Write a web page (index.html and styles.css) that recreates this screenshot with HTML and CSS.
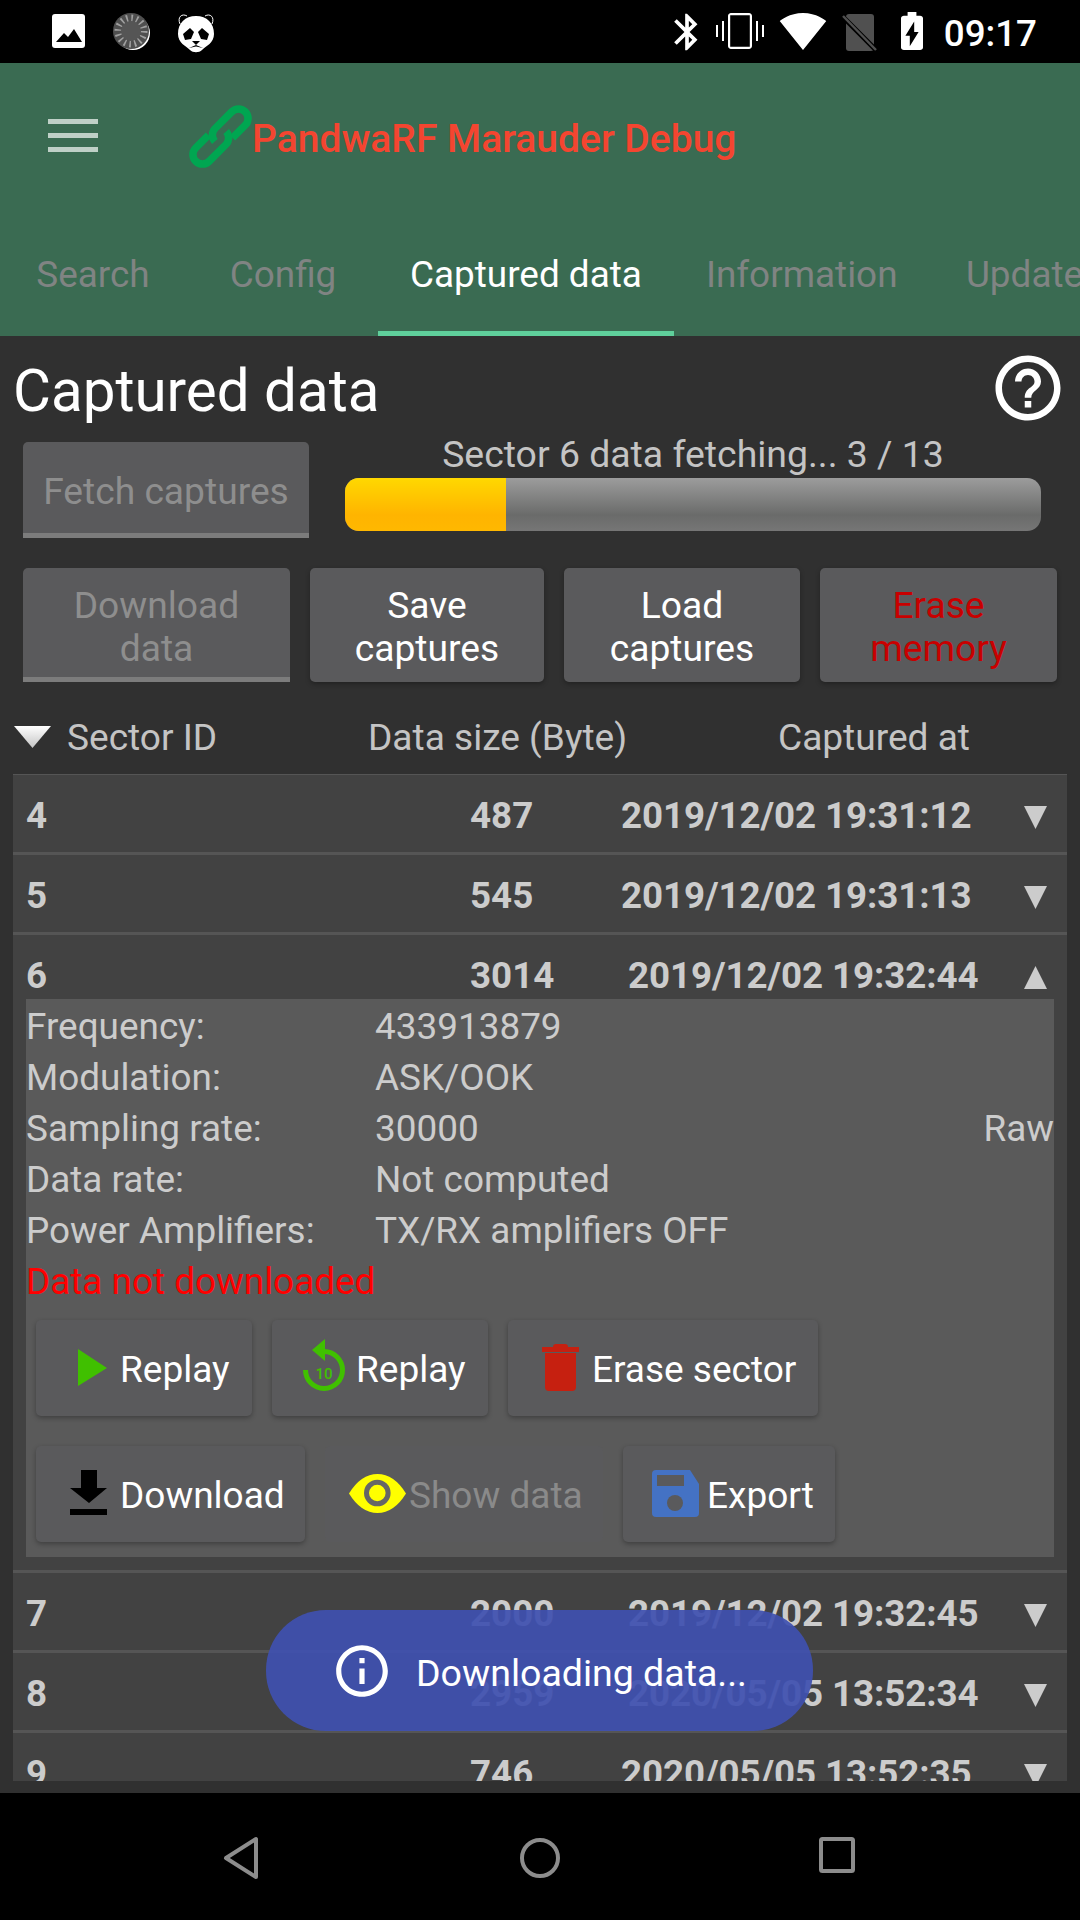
FILE: index.html
```html
<!DOCTYPE html>
<html lang="en">
<head>
    <meta charset="UTF-8">
    <meta name="viewport" content="width=device-width, initial-scale=1.0">
    <title>PandwaRF Marauder Debug</title>
    <link rel="stylesheet" href="styles.css">
</head>
<body>
<div class="screen">
    <div class="status-bar">
        <div class="status-left">
            <svg class="ic-image" width="33" height="34" viewBox="0 0 33 34"><rect width="33" height="34" rx="3" fill="#fff"/><path d="M4 28 L12 19 L16 23 L22 15 L30 28z" fill="#000"/></svg>
            <svg class="ic-spin" width="38" height="37" viewBox="0 0 38 37"><circle cx="20" cy="20" r="17" fill="#fff"/><circle cx="18" cy="18" r="18" fill="#4f4f4f"/><circle cx="18" cy="18" r="13" fill="none" stroke="#a0a0a0" stroke-width="7" stroke-dasharray="1.6 3.5"/><circle cx="18" cy="18" r="10" fill="#555"/></svg>
            <svg class="ic-panda" width="38" height="40" viewBox="0 0 38 40"><path d="M3 11 C0 4 5 0 10 3 M35 11 C38 4 33 0 28 3" fill="none" stroke="#fff" stroke-width="1"/><path d="M19 3 C30 3 37 10 37 21 C37 30 29 33 25 37 C22 40 16 40 13 37 C9 33 1 30 1 21 C1 10 8 3 19 3z" fill="#fff"/><path d="M6 21 L13 15 L17 19 L14 26 L8 27z M32 21 L25 15 L21 19 L24 26 L30 27z" fill="#000"/><path d="M15 28 H23 L19 32z M12 35 L19 32 L26 35 L19 33.5z" fill="#000"/></svg>
        </div>
        <div class="status-right">
            <svg class="ic-bt" width="44" height="44" viewBox="0 0 24 24" fill="#fff"><path d="M17.71 7.71L12 2h-1v7.59L6.41 5 5 6.41 10.59 12 5 17.59 6.41 19 11 14.41V22h1l5.71-5.71-4.3-4.29 4.3-4.29zM13 5.83l1.88 1.88L13 9.59V5.83zm1.88 10.46L13 18.17v-3.76l1.88 1.88z"/></svg>
            <svg class="ic-vib" width="48" height="48" viewBox="0 0 24 24" fill="#fff"><path d="M0 15h1V9H0v6zm3 2h1V7H3v10zm17-8v8h1V7h-1zm3 0v6h1V9h-1zM16.5 3h-9C6.67 3 6 3.67 6 4.5v15c0 .83.67 1.5 1.5 1.5h9c.83 0 1.5-.67 1.5-1.5v-15c0-.83-.67-1.5-1.5-1.5zM16.9 19.9H7.1V4.1h9.8v15.8z"/></svg>
            <svg class="ic-wifi" width="48" height="48" viewBox="0 0 24 24" fill="#fff"><path d="M12.01 21.49L23.64 7c-.45-.34-4.93-4-11.64-4C5.28 3 .81 6.66.36 7l11.63 14.49.01.01.01-.01z"/></svg>
            <svg class="ic-sim" width="35" height="38" viewBox="0 0 35 38"><path d="M7 0 H29 Q32 0 32 3 V34 Q32 37 29 37 H7 Q4 37 4 34 V3 Q4 0 7 0z" fill="#505050"/><path d="M0 2 L35 37" stroke="#000" stroke-width="5"/><path d="M1 2 L34 36" stroke="#505050" stroke-width="2.5"/></svg>
            <svg class="ic-batt" width="22" height="38" viewBox="7 2 10 20" preserveAspectRatio="none" fill="#fff"><path d="M15.67 4H14V2h-4v2H8.33C7.6 4 7 4.6 7 5.33v15.33C7 21.4 7.6 22 8.33 22h7.33c.74 0 1.34-.6 1.34-1.33V5.33C17 4.6 16.4 4 15.67 4zM11 20v-5.5H9L13 7v5.5h2L11 20z"/></svg>
            <span class="clock">09:17</span>
        </div>
    </div>

    <header class="app-bar">
        <div class="toolbar">
            <div class="burger"><span></span><span></span><span></span></div>
            <svg class="ic-link" width="63" height="63" viewBox="0 0 63 63"><g transform="rotate(-45 31.5 31.5)" fill="none" stroke="#00a651" stroke-width="7.5"><path d="M24 22 H6 a9.5 9.5 0 0 0 0 19 H30 a9.5 9.5 0 0 0 9 -9"/><path d="M39 41 H57 a9.5 9.5 0 0 0 0 -19 H33 a9.5 9.5 0 0 0 -9 9"/></g></svg>
            <span class="app-title">PandwaRF Marauder Debug</span>
        </div>
        <nav class="tabs">
            <a class="tab">Search</a>
            <a class="tab">Config</a>
            <a class="tab tab-active">Captured data</a>
            <a class="tab">Information</a>
            <a class="tab">Update</a>
        </nav>
    </header>

    <main class="content">
        <div class="title-row">
            <h1>Captured data</h1>
            <svg width="78" height="78" viewBox="0 0 24 24" fill="#fff"><path d="M11 18h2v-2h-2v2zm1-16C6.48 2 2 6.48 2 12s4.48 10 10 10 10-4.48 10-10S17.52 2 12 2zm0 18c-4.41 0-8-3.59-8-8s3.59-8 8-8 8 3.59 8 8-3.59 8-8 8zm0-14c-2.21 0-4 1.79-4 4h2c0-1.1.9-2 2-2s2 .9 2 2c0 2-3 1.75-3 5h2c0-2.25 3-2.5 3-5 0-2.21-1.79-4-4-4z"/></svg>
        </div>

        <div class="fetch-row">
            <button class="btn btn-off fetch-btn">Fetch captures</button>
            <div class="progress-box">
                <div class="progress-label">Sector 6 data fetching... 3 / 13</div>
                <div class="progress"><div class="progress-fill" style="width: 23.2%"></div></div>
            </div>
        </div>

        <div class="action-row">
            <button class="btn btn-off">Download<br>data</button>
            <button class="btn">Save<br>captures</button>
            <button class="btn">Load<br>captures</button>
            <button class="btn btn-danger">Erase<br>memory</button>
        </div>

        <div class="list-head">
            <svg width="37" height="24" viewBox="0 0 37 24"><defs><linearGradient id="headTri" x1="0" y1="0" x2="0" y2="1"><stop offset="0" stop-color="#fff"/><stop offset="1" stop-color="#c4c4c4"/></linearGradient></defs><polygon points="0,1 37,1 18.5,23" fill="url(#headTri)"/></svg>
            <span>Sector ID</span>
            <span>Data size (Byte)</span>
            <span>Captured at</span>
        </div>

        <div class="list">
            <div class="row">
                <div class="row-head"><span>4</span><span>487</span><span>2019/12/02 19:31:12</span><svg class="arrow" viewBox="0 0 23 23"><polygon points="0,0 23,0 11.5,23"/></svg></div>
            </div>
            <div class="row">
                <div class="row-head"><span>5</span><span>545</span><span>2019/12/02 19:31:13</span><svg class="arrow" viewBox="0 0 23 23"><polygon points="0,0 23,0 11.5,23"/></svg></div>
            </div>
            <div class="row row-open">
                <div class="row-head row-shift"><span>6</span><span>3014</span><span>2019/12/02 19:32:44</span><svg class="arrow" viewBox="0 0 23 23"><polygon points="0,23 23,23 11.5,0"/></svg></div>
                <div class="details">
                    <div class="line"><span>Frequency:</span><span>433913879</span></div>
                    <div class="line"><span>Modulation:</span><span>ASK/OOK</span></div>
                    <div class="line"><span>Sampling rate:</span><span>30000</span><span class="raw">Raw</span></div>
                    <div class="line"><span>Data rate:</span><span>Not computed</span></div>
                    <div class="line"><span>Power Amplifiers:</span><span>TX/RX amplifiers OFF</span></div>
                    <div class="line line-error">Data not downloaded</div>
                    <div class="btn-row">
                        <button class="btn icon-btn w-replay">
                            <svg width="57" height="57" viewBox="0 0 57 57"><polygon points="14,9 43,28 14,46" fill="#40c000"/></svg>Replay</button>
                        <button class="btn icon-btn w-replay">
                            <svg width="57" height="57" viewBox="0 0 57 57"><path d="M24 11.5 A18.5 18.5 0 1 1 5.5 30" fill="none" stroke="#40c000" stroke-width="5"/><polygon points="25,-1 12,10 25,21" fill="#40c000"/><text x="24" y="39" class="ten">10</text></svg>Replay</button>
                        <button class="btn icon-btn w-erase">
                            <svg width="57" height="57" viewBox="0 0 57 57" fill="#c62010"><path d="M17 7 Q17 4 20 4 H29 Q32 4 32 7 H43 V12 H6 V7z"/><path d="M9 13 H40 V47 Q40 51 36 51 H13 Q9 51 9 47z"/></svg>Erase sector</button>
                    </div>
                    <div class="btn-row">
                        <button class="btn icon-btn w-download">
                            <svg width="57" height="57" viewBox="0 0 57 57"><polygon points="17,4 33,4 33,22 43,22 25,37 6,22 17,22"/><rect x="6" y="43" width="37" height="6"/></svg>Download</button>
                        <button class="btn icon-btn btn-flat w-show">
                            <svg width="57" height="57" viewBox="0 0 57 57"><path d="M-4 27.5 Q8 8 24.5 8 Q41 8 53 27.5 Q41 47 24.5 47 Q8 47 -4 27.5z" fill="#ff0"/><circle cx="24.3" cy="27" r="10.8" fill="none" stroke="#666" stroke-width="5"/></svg>Show data</button>
                        <button class="btn icon-btn w-export">
                            <svg width="57" height="57" viewBox="0 0 57 57"><path d="M5 4 H39 L48 18 V47 Q48 51 44 51 H5 Q1 51 1 47 V8 Q1 4 5 4z" fill="#4472c4"/><rect x="6" y="9" width="27" height="11" fill="#5a5a5c"/><circle cx="24" cy="37" r="8" fill="#5a5a5c"/></svg>Export</button>
                    </div>
                </div>
            </div>
            <div class="row">
                <div class="row-head row-shift"><span>7</span><span>2000</span><span>2019/12/02 19:32:45</span><svg class="arrow" viewBox="0 0 23 23"><polygon points="0,0 23,0 11.5,23"/></svg></div>
            </div>
            <div class="row">
                <div class="row-head row-shift"><span>8</span><span>2959</span><span>2020/05/05 13:52:34</span><svg class="arrow" viewBox="0 0 23 23"><polygon points="0,0 23,0 11.5,23"/></svg></div>
            </div>
            <div class="row">
                <div class="row-head"><span>9</span><span>746</span><span>2020/05/05 13:52:35</span><svg class="arrow" viewBox="0 0 23 23"><polygon points="0,0 23,0 11.5,23"/></svg></div>
            </div>
        </div>

        <div class="toast">
            <svg width="62" height="62" viewBox="0 0 24 24" fill="#fff"><path d="M11 17h2v-6h-2v6zm1-15C6.48 2 2 6.48 2 12s4.48 10 10 10 10-4.48 10-10S17.52 2 12 2zm0 18c-4.41 0-8-3.59-8-8s3.59-8 8-8 8 3.59 8 8-3.59 8-8 8zM11 9h2V7h-2v2z"/></svg>
            <span>Downloading data...</span>
        </div>
    </main>

    <footer class="nav-bar">
        <svg width="38" height="44" viewBox="0 0 38 44"><polygon points="34,3 34,41 4,22" fill="none" stroke="#8c8c8c" stroke-width="4" stroke-linejoin="round"/></svg>
        <svg width="44" height="44" viewBox="0 0 44 44"><circle cx="22" cy="22" r="18" fill="none" stroke="#8c8c8c" stroke-width="4"/></svg>
        <svg width="38" height="38" viewBox="0 0 38 38"><rect x="3" y="3" width="32" height="32" rx="1.5" fill="none" stroke="#8c8c8c" stroke-width="4"/></svg>
    </footer>
</div>
</body>
</html>
```

FILE: styles.css
```css
* {
    box-sizing: border-box;
}
body {
    margin: 0;
    font-family: Roboto, "Noto Sans", sans-serif;
    background: #000;
}
.screen {
    width: 1080px;
    height: 1920px;
    display: flex;
    flex-direction: column;
    overflow: hidden;
}

/* status bar */
.status-bar {
    height: 63px;
    flex: none;
    background: #000;
    display: flex;
    justify-content: space-between;
    align-items: flex-start;
}
.status-left {
    display: flex;
    padding: 13px 0 0 52px;
}
.ic-image {
    margin-top: 1px;
}
.ic-spin {
    margin-left: 28px;
}
.ic-panda {
    margin-left: 26px;
}
.status-right {
    display: flex;
    align-items: flex-start;
    padding-right: 43px;
}
.ic-bt {
    margin-top: 10px;
}
.ic-vib {
    margin: 7px 0 0 7px;
}
.ic-wifi {
    margin: 7px 0 0 15px;
}
.ic-sim {
    margin: 14px 0 0 15px;
}
.ic-batt {
    margin: 12px 0 0 24px;
}
.clock {
    margin-left: 21px;
    color: #fff;
    font-size: 36.75px;
    font-weight: 500;
    line-height: 67px;
}

/* app bar */
.app-bar {
    height: 273px;
    flex: none;
    background: #3a6b52;
    display: flex;
    flex-direction: column;
    justify-content: space-between;
}
.toolbar {
    height: 152px;
    display: flex;
    align-items: flex-start;
    padding: 42px 0 0 48px;
}
.burger {
    width: 50px;
    margin-top: 14px;
    display: flex;
    flex-direction: column;
    gap: 9px;
}
.burger span {
    height: 5px;
    background: #bfd0c7;
}
.ic-link {
    margin-left: 91px;
}
.app-title {
    color: #f44530;
    font-size: 39px;
    font-weight: 500;
    line-height: 68px;
}
.tabs {
    display: flex;
    margin-left: -2px;
    white-space: nowrap;
}
.tab {
    flex: none;
    min-width: 190px;
    height: 106px;
    padding: 0 32px 12px;
    display: flex;
    align-items: center;
    justify-content: center;
    color: #808483;
    font-size: 36.9px;
    border-bottom: 5px solid transparent;
}
.tab-active {
    color: #fff;
    border-bottom-color: #5fcf9b;
}

/* content */
.content {
    flex: 1;
    min-height: 0;
    position: relative;
    display: flex;
    flex-direction: column;
    background: #303030;
    padding: 0 13px 12px;
}
.title-row {
    height: 106px;
    flex: none;
    display: flex;
    justify-content: space-between;
    align-items: flex-start;
    padding: 13px 0 0;
}
h1 {
    margin: 0;
    color: #fff;
    font-size: 58.3px;
    font-weight: 400;
    line-height: 84px;
}
.btn {
    border: none;
    border-radius: 5px;
    background: #5a5a5c;
    color: #fff;
    font-family: inherit;
    font-size: 37.2px;
    line-height: 43px;
    padding: 4px 0 0;
    box-shadow: 0 2px 5px rgba(0, 0, 0, 0.3);
}
.btn-off {
    color: #8e8e8e;
    border-bottom: 5px solid #7c7c7c;
    border-radius: 5px 5px 0 0;
    box-shadow: none;
    padding-top: 8px;
}
.btn-danger {
    color: #c80000;
}
.fetch-row {
    height: 96px;
    flex: none;
    display: flex;
    padding: 0 26px 0 10px;
}
.fetch-btn {
    width: 286px;
    flex: none;
    white-space: nowrap;
}
.progress-box {
    flex: 1;
    margin-left: 36px;
}
.progress-label {
    height: 36px;
    color: #c4c4c4;
    font-size: 37.4px;
    line-height: 25px;
    text-align: center;
    white-space: nowrap;
}
.progress {
    height: 53px;
    border-radius: 14px;
    overflow: hidden;
    background: linear-gradient(#9c9c9c, #6a6b6a 70%, #767676);
}
.progress-fill {
    height: 100%;
    background: linear-gradient(#ffd800, #ffb400 70%, #ffb800);
}
.action-row {
    height: 114px;
    flex: none;
    margin-top: 30px;
    padding: 0 10px;
    display: grid;
    grid-template-columns: 267px 234px 236px 237px;
    gap: 20px;
}
.list-head {
    height: 74px;
    margin-top: 18px;
    flex: none;
    display: grid;
    grid-template-columns: 53px 301px 410px auto;
    align-items: center;
    padding-left: 1px;
    color: #c4c4c4;
    font-size: 37.1px;
}

/* sector list */
.list {
    flex: 1;
    min-height: 0;
    overflow: hidden;
}
.row {
    border-top: 3px solid #555;
    background: #424242;
}
.row:first-child {
    border-top-width: 1px;
}
.row-head {
    height: 77px;
    display: grid;
    grid-template-columns: 444px 151px 403px 23px;
    padding-left: 13px;
    color: #ccc;
    font-size: 36.75px;
    font-weight: 700;
    line-height: 81px;
}
.row-head span:nth-child(3) {
    letter-spacing: -0.1px;
}
.row-shift span:nth-child(3) {
    padding-left: 7px;
}
.arrow {
    width: 23px;
    height: 23px;
    margin-top: 31px;
    fill: #ccc;
}
.row-open .row-head {
    height: 64px;
}
.row-open {
    padding-bottom: 13px;
}
.details {
    position: relative;
    margin: 0 13px;
    padding: 2px 0 15px;
    background: #5a5a5a;
    color: #ccc;
    font-size: 36.9px;
}
.line {
    height: 51px;
    line-height: 51px;
    display: grid;
    grid-template-columns: 349px 1fr auto;
    white-space: nowrap;
}
.line-error {
    color: #f00;
    display: block;
}
.btn-row {
    display: flex;
    gap: 20px;
    padding-left: 10px;
    margin-top: 30px;
}
.line-error + .btn-row {
    margin-top: 13px;
}
.icon-btn {
    height: 96px;
    display: flex;
    align-items: center;
    padding: 2px 0 0 28px;
    white-space: nowrap;
    font-size: 37px;
}
.icon-btn svg {
    flex: none;
    overflow: visible;
    margin: -2px -1px 0 0;
}
.ten {
    fill: #40c000;
    font-size: 15px;
    font-weight: 500;
    text-anchor: middle;
}
.btn-flat {
    color: #8a8a8a;
    box-shadow: none;
}
.w-replay {
    width: 216px;
}
.w-erase {
    width: 310px;
}
.w-download {
    width: 269px;
}
.w-show {
    width: 278px;
}
.w-export {
    width: 212px;
}

/* toast over the list */
.toast {
    position: absolute;
    left: 266px;
    top: 1274px;
    width: 547px;
    height: 121px;
    border-radius: 60px;
    background: rgba(63, 81, 175, 0.93);
    color: #fff;
    font-size: 37.5px;
    display: flex;
    align-items: center;
    padding-left: 65px;
    gap: 23px;
}
.toast span {
    padding-top: 4px;
}

/* nav bar */
.nav-bar {
    height: 127px;
    flex: none;
    background: #000;
    display: grid;
    grid-template-columns: 296px 300px 1fr;
    padding-left: 222px;
    padding-top: 43px;
}
```
